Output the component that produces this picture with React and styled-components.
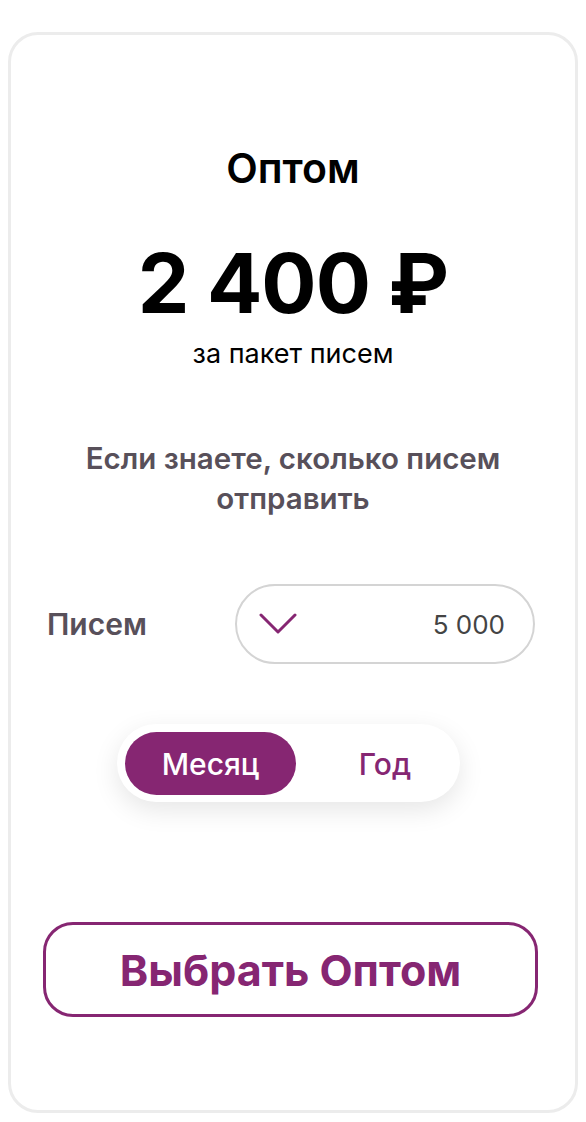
import React, { useState } from 'react'
import styled, { createGlobalStyle } from 'styled-components'

const GlobalStyle = createGlobalStyle`
  body {
    margin: 0;
    background: #fff;
    font-family: Inter, "Noto Sans", sans-serif;
  }
`

const purple = '#862672'

const Card = styled.section`
  box-sizing: border-box;
  margin: 32px 8px 0;
  height: 1081px;
  border: 3px solid #ececec;
  border-radius: 30px;
  background: #fff;
  padding: 109px 32px 0;
  display: flex;
  flex-direction: column;
  align-items: center;
`

const Title = styled.h2`
  margin: 0;
  font-size: 41px;
  line-height: 48px;
  font-weight: 600;
  color: #000;
`

const Price = styled.div`
  margin-top: 47px;
  font-size: 82px;
  line-height: 90px;
  font-weight: 700;
  color: #000;
  letter-spacing: -1px;
`

const PriceNote = styled.div`
  margin-top: 9px;
  font-size: 27px;
  line-height: 32px;
  color: #000;
`

const Hint = styled.p`
  margin: 68px 0 0;
  font-size: 29.5px;
  line-height: 40px;
  font-weight: 600;
  color: #58505a;
  text-align: center;
`

const Row = styled.div`
  align-self: stretch;
  margin-top: 66px;
  display: flex;
  align-items: center;
  justify-content: space-between;
  padding: 0 8px 0 4px;
`

const Label = styled.span`
  font-size: 30px;
  font-weight: 600;
  color: #58505a;
`

const Select = styled.div`
  box-sizing: border-box;
  width: 300px;
  height: 80px;
  border: 2px solid #d4d4d4;
  border-radius: 40px;
  display: flex;
  align-items: center;
  justify-content: space-between;
  padding: 0 28px 0 22px;
  font-size: 26px;
  color: #444;
`

const Toggle = styled.div`
  margin: 60px 9px 0 0;
  display: flex;
  align-items: center;
  padding: 8px 8px 7px;
  border-radius: 40px;
  background: #fff;
  box-shadow: 0 8px 26px rgba(0, 0, 0, 0.1);
`

const ToggleOption = styled.button`
  box-sizing: border-box;
  border: none;
  font-family: inherit;
  width: ${p => (p.$active ? '171px' : '156px')};
  padding: ${p => (p.$active ? '0' : '0 0 0 22px')};
  height: 63px;
  border-radius: 32px;
  font-size: 30px;
  font-weight: 500;
  cursor: pointer;
  background: ${p => (p.$active ? purple : 'transparent')};
  color: ${p => (p.$active ? '#fff' : purple)};
`

const ChooseButton = styled.button`
  box-sizing: border-box;
  margin: 120px 5px 0 0;
  align-self: stretch;
  height: 95px;
  border: 3px solid ${purple};
  border-radius: 30px;
  background: #fff;
  color: ${purple};
  font-family: inherit;
  font-size: 43px;
  font-weight: 700;
  cursor: pointer;
`

const Chevron = () => (
  <svg width="38" height="22" viewBox="0 0 38 22" fill="none">
    <path
      d="M2 2 L19 19 L36 2"
      stroke={purple}
      strokeWidth="3"
      strokeLinecap="round"
      strokeLinejoin="round"
    />
  </svg>
)

export default function App() {
  const [period, setPeriod] = useState('month')
  return (
    <>
      <GlobalStyle />
      <Card>
        <Title>Оптом</Title>
        <Price>2 400 ₽</Price>
        <PriceNote>за пакет писем</PriceNote>
        <Hint>
          Если знаете, сколько писем
          <br />
          отправить
        </Hint>
        <Row>
          <Label>Писем</Label>
          <Select>
            <Chevron />
            <span>5 000</span>
          </Select>
        </Row>
        <Toggle>
          <ToggleOption $active={period === 'month'} onClick={() => setPeriod('month')}>
            Месяц
          </ToggleOption>
          <ToggleOption $active={period === 'year'} onClick={() => setPeriod('year')}>
            Год
          </ToggleOption>
        </Toggle>
        <ChooseButton>Выбрать Оптом</ChooseButton>
      </Card>
    </>
  )
}
